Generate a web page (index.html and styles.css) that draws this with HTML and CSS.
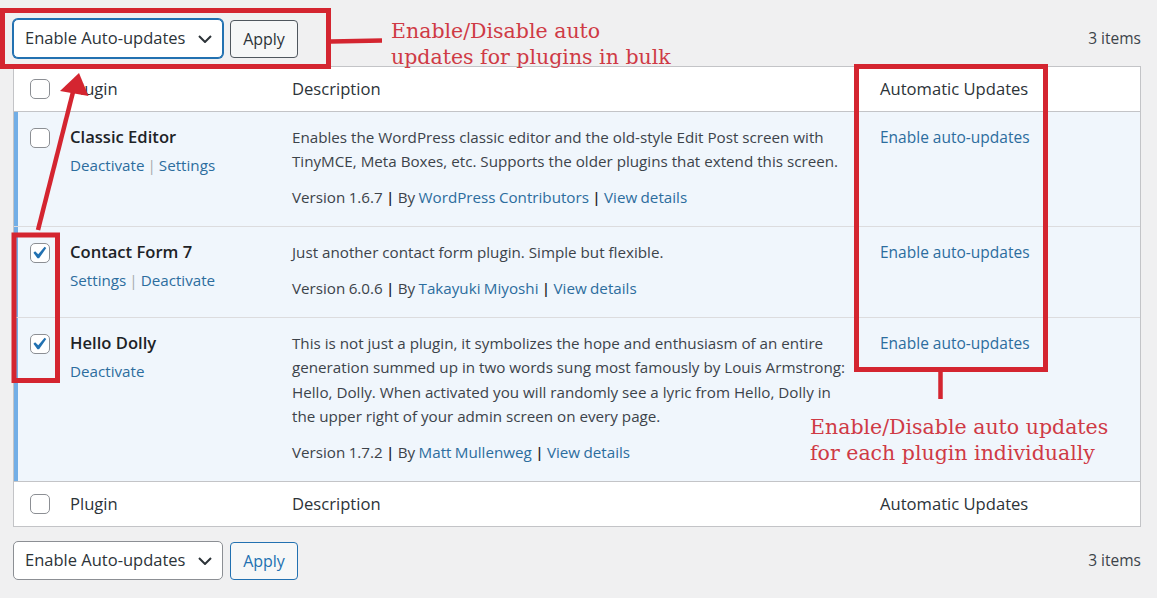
FILE: index.html
```html
<!DOCTYPE html>
<html lang="en">
<head>
<meta charset="utf-8">
<title>Plugins</title>
<link rel="stylesheet" href="styles.css">
</head>
<body>
<div class="wrap">
  <div class="tablenav">
    <div class="select focused"><span>Enable Auto-updates</span><svg class="chev" width="14" height="8" viewBox="0 0 14 8"><polyline points="1,1 7,7 13,1" fill="none" stroke="#2c3338" stroke-width="2"/></svg></div>
    <button class="apply">Apply</button>
    <span class="num">3 items</span>
  </div>

  <div class="table">
    <div class="row head">
      <div class="cell check"><span class="cb"></span></div>
      <div class="cell">Plugin</div>
      <div class="cell">Description</div>
      <div class="cell">Automatic Updates</div>
    </div>

    <div class="row active">
      <div class="cell check"><span class="cb"></span></div>
      <div class="cell plugin">
        <strong class="title">Classic Editor</strong>
        <div class="actions"><a>Deactivate</a><span class="sep">|</span><a>Settings</a></div>
      </div>
      <div class="cell desc">
        <p>Enables the WordPress classic editor and the old-style Edit Post screen with<br>TinyMCE, Meta Boxes, etc. Supports the older plugins that extend this screen.</p>
        <p class="ver">Version 1.6.7 <span class="vsep">|</span> By <a>WordPress Contributors</a> <span class="vsep">|</span> <a>View details</a></p>
      </div>
      <div class="cell auto"><a>Enable auto-updates</a></div>
    </div>

    <div class="row active">
      <div class="cell check"><span class="cb on"><svg viewBox="3.8 2.6 14.6 14.6" width="18" height="18"><path d="M14.83 4.89l1.34.94-5.81 8.38H9.02L5.78 9.67l1.34-1.25 2.57 2.4z" fill="#2271b1"/></svg></span></div>
      <div class="cell plugin">
        <strong class="title">Contact Form 7</strong>
        <div class="actions"><a>Settings</a><span class="sep">|</span><a>Deactivate</a></div>
      </div>
      <div class="cell desc">
        <p>Just another contact form plugin. Simple but flexible.</p>
        <p class="ver">Version 6.0.6 <span class="vsep">|</span> By <a>Takayuki Miyoshi</a> <span class="vsep">|</span> <a>View details</a></p>
      </div>
      <div class="cell auto"><a>Enable auto-updates</a></div>
    </div>

    <div class="row active">
      <div class="cell check"><span class="cb on"><svg viewBox="3.8 2.6 14.6 14.6" width="18" height="18"><path d="M14.83 4.89l1.34.94-5.81 8.38H9.02L5.78 9.67l1.34-1.25 2.57 2.4z" fill="#2271b1"/></svg></span></div>
      <div class="cell plugin">
        <strong class="title">Hello Dolly</strong>
        <div class="actions"><a>Deactivate</a></div>
      </div>
      <div class="cell desc">
        <p>This is not just a plugin, it symbolizes the hope and enthusiasm of an entire<br>generation summed up in two words sung most famously by Louis Armstrong:<br>Hello, Dolly. When activated you will randomly see a lyric from Hello, Dolly in<br>the upper right of your admin screen on every page.</p>
        <p class="ver">Version 1.7.2 <span class="vsep">|</span> By <a>Matt Mullenweg</a> <span class="vsep">|</span> <a>View details</a></p>
      </div>
      <div class="cell auto"><a>Enable auto-updates</a></div>
    </div>

    <div class="row foot">
      <div class="cell check"><span class="cb"></span></div>
      <div class="cell">Plugin</div>
      <div class="cell">Description</div>
      <div class="cell">Automatic Updates</div>
    </div>
  </div>

  <div class="tablenav bottom">
    <div class="select"><span>Enable Auto-updates</span><svg class="chev" width="14" height="8" viewBox="0 0 14 8"><polyline points="1,1 7,7 13,1" fill="none" stroke="#2c3338" stroke-width="2"/></svg></div>
    <button class="apply blue">Apply</button>
    <span class="num">3 items</span>
  </div>
</div>

<svg class="overlay" width="1157" height="598" viewBox="0 0 1157 598">
  <g fill="none" stroke="#d42530" stroke-width="5">
    <rect x="2.5" y="10.5" width="326" height="56"/>
    <rect x="856.5" y="66.5" width="189" height="303"/>
    <rect x="14" y="235" width="43.5" height="145.5"/>
  </g>
  <g stroke="#d42530" stroke-width="4.5" stroke-linecap="butt">
    <line x1="331" y1="41.5" x2="382" y2="40.5"/>
    <line x1="940.5" y1="372" x2="940.5" y2="399"/>
    <line x1="38" y1="230" x2="73" y2="92"/>
  </g>
  <polygon points="79,73 60,91 88.5,96" fill="#d42530"/>
</svg>
<div class="note note-top">Enable/Disable auto<br>updates for plugins in bulk</div>
<div class="note note-right">Enable/Disable auto updates<br>for each plugin individually</div>
</body>
</html>
```

FILE: styles.css
```css
* { box-sizing: border-box; }

body {
  margin: 0;
  background: #f0f0f1;
  font-family: "Open Sans", "Noto Sans", sans-serif;
  font-size: 15.2px;
  line-height: 24.4px;
  color: #3c434a;
  width: 1157px;
  height: 598px;
  overflow: hidden;
  position: relative;
}

.wrap {
  padding: 19px 16px 0 13px;
}

.tablenav {
  display: flex;
  align-items: center;
  height: 39px;
  margin-bottom: 8px;
}

.tablenav.bottom {
  margin-top: 14px;
  margin-bottom: 0;
}

.select {
  width: 210px;
  height: 39px;
  border: 1px solid #8c8f94;
  border-radius: 5px;
  background: #fff;
  display: flex;
  align-items: center;
  justify-content: space-between;
  padding: 0 10px 0 11px;
  color: #2c3338;
  font-size: 16.5px;
}

.select.focused {
  border-color: #2271b1;
  box-shadow: 0 0 0 1px #2271b1;
}

.chev { flex: none; margin-top: 1px; }

.apply {
  margin-left: 7px;
  width: 68px;
  height: 38px;
  border: 1px solid #50575e;
  border-radius: 4px;
  background: #f6f7f7;
  color: #2c3338;
  font-family: inherit;
  font-size: 16px;
  padding: 0;
}

.apply.blue {
  border-color: #2271b1;
  color: #2271b1;
}

.num {
  margin-left: auto;
  color: #3c434a;
  font-size: 15.5px;
}

.table {
  background: #fff;
  border: 1px solid #c3c4c7;
}

.row {
  display: grid;
  grid-template-columns: 56px 222px 588px 1fr;
  border-bottom: 1px solid #dcdcde;
}

.row.head {
  border-bottom-color: #c3c4c7;
  height: 45px;
  align-items: center;
  color: #2c3338;
  font-size: 16.6px;
}

.row.foot {
  border-bottom: none;
  height: 44px;
  align-items: center;
  color: #2c3338;
  font-size: 16.6px;
}

.row.active:nth-last-child(2) { border-bottom-color: #c3c4c7; }

.row.active {
  background: #f0f6fc;
  box-shadow: inset 4px 0 0 #72aee6;
}

.row.active .cell {
  padding-top: 13px;
  padding-bottom: 17px;
}

.cell.check {
  padding-left: 16px;
}

.row.head .cell.check,
.row.foot .cell.check {
  display: flex;
  align-items: center;
}

.row.active .cell.check {
  padding-top: 16px;
}

.cb {
  display: block;
  width: 20px;
  height: 20px;
  border: 1px solid #8c8f94;
  border-radius: 5px;
  background: #fff;
}

.cb svg { display: block; }

.title {
  display: block;
  font-weight: 600;
  font-size: 16.6px;
  color: #1d2327;
}

.actions {
  margin-top: 3.5px;
}

a {
  color: #2c6d9e;
  text-decoration: none;
}

.sep {
  color: #a7aaad;
  margin: 0 3px;
}

.desc p {
  margin: 0;
  white-space: nowrap;
}

.desc p.ver {
  margin-top: 11px;
  word-spacing: -0.6px;
}

.vsep { color: #1d2327; font-weight: 600; }

.auto { font-size: 15.5px; }

.overlay {
  position: absolute;
  left: 0;
  top: 0;
  pointer-events: none;
}

.note {
  position: absolute;
  font-family: "DejaVu Serif", Georgia, serif;
  font-size: 20.5px;
  line-height: 26px;
  color: #cf3a45;
  white-space: nowrap;
}

.note-top {
  left: 391px;
  top: 18px;
}

.note-right {
  left: 810px;
  top: 414px;
}
```
